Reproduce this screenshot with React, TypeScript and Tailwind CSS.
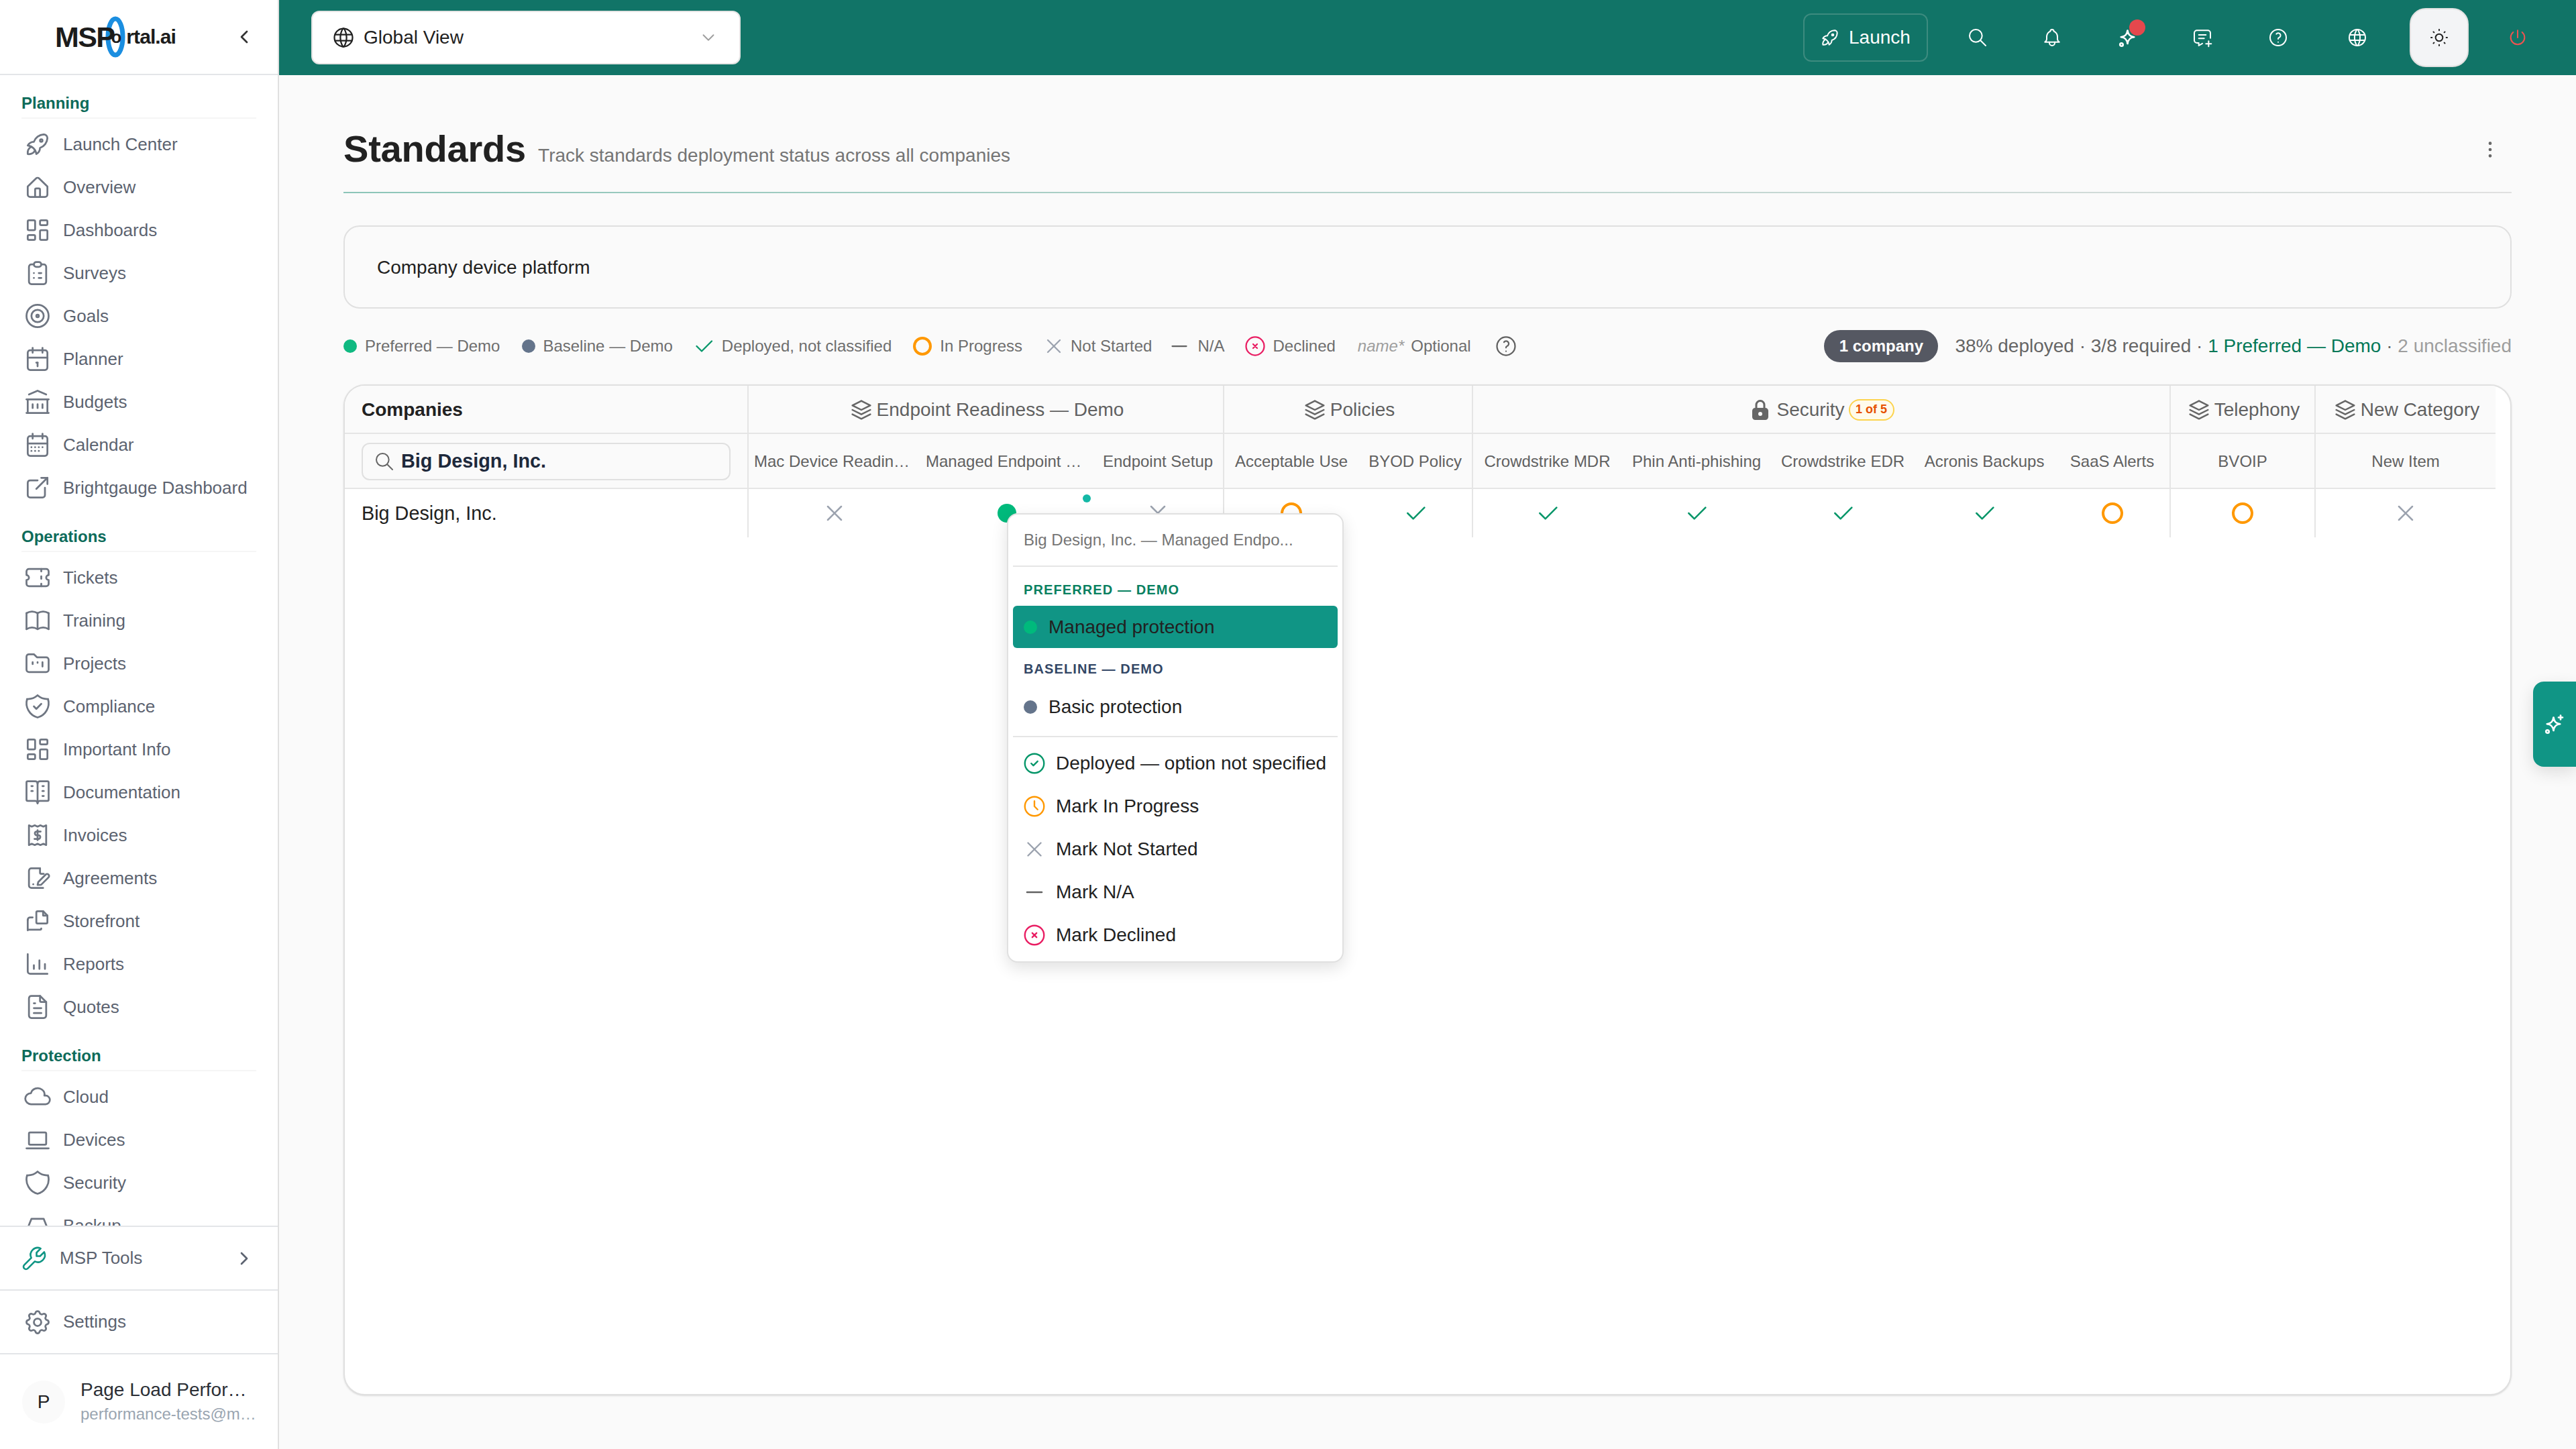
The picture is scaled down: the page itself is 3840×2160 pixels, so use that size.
import type { ReactNode } from 'react';
import {
  TbRocket, TbLayoutDashboard, TbClipboardList, TbTarget, TbCalendar, TbBuildingBank,
  TbCalendarMonth, TbExternalLink, TbTicket, TbBook, TbVocabulary,
  TbFileText, TbCloud, TbDeviceLaptop, TbShield, TbTool, TbSettings,
  TbChevronRight, TbChevronLeft, TbChevronDown, TbSearch, TbBell, TbMessagePlus, TbHelp,
  TbWorld, TbSun, TbPower, TbStack2, TbLockFilled, TbCircleCheck, TbClock, TbX, TbMinus,
  TbCircleX, TbDotsVertical, TbCheck,
} from 'react-icons/tb';

function Glyph({ size = 44, sw = 1.5, children }: { size?: number; sw?: number; children: ReactNode }) {
  return (
    <svg width={size} height={size} viewBox="0 0 24 24" fill="none" stroke="currentColor" strokeWidth={sw} strokeLinecap="round" strokeLinejoin="round">
      {children}
    </svg>
  );
}

const HomeIcon = () => (
  <Glyph><path d="M4 11.5L10.6 5a2 2 0 0 1 2.8 0L20 11.5V18a2 2 0 0 1-2 2H6a2 2 0 0 1-2-2z" /><path d="M10 20v-6a1 1 0 0 1 1-1h2a1 1 0 0 1 1 1v6" /></Glyph>
);
const ProjectsIcon = () => (
  <Glyph><path d="M5 4.5h4l2.5 2.5H19a2 2 0 0 1 2 2v8a2 2 0 0 1-2 2H5a2 2 0 0 1-2-2V6.5a2 2 0 0 1 2-2" /><path d="M8 11v1.5M12 11v.5M16 11v3.5" /></Glyph>
);
const ComplianceIcon = () => (
  <Glyph><path d="M12 3a12 12 0 0 0 8.5 3a12 12 0 0 1-8.5 15a12 12 0 0 1-8.5-15a12 12 0 0 0 8.5-3" /><path d="M9 12l2 2l4-4" /></Glyph>
);
const InvoiceIcon = () => (
  <Glyph><path d="M5 4l2.3 1 2.4-1 2.3 1 2.3-1 2.4 1L19 4v16l-2.3-1-2.4 1-2.3-1-2.3 1-2.4-1L5 20z" /><path d="M14.5 9h-3.2a1.5 1.5 0 0 0 0 3h1.4a1.5 1.5 0 0 1 0 3H9.5" /><path d="M12 8v8" /></Glyph>
);
const AgreementIcon = () => (
  <Glyph><path d="M14 4H7a2 2 0 0 0-2 2v12a2 2 0 0 0 2 2h9.5" /><path d="M14 4v3.5a1 1 0 0 0 1 1h2" /><path d="M8.5 17h.01" /><path d="M12 17.5l.6-2.4 6-6a1.6 1.6 0 0 1 2.3 2.3l-6 6z" /></Glyph>
);
const StorefrontIcon = () => (
  <Glyph><path d="M11 5a1 1 0 0 1 1-1h4.5L20 7.5V13a1 1 0 0 1-1 1h-7a1 1 0 0 1-1-1z" /><path d="M8 9H6a2 2 0 0 0-2 2" /><path d="M4 11v8.5" /><path d="M4 19h10a1 1 0 0 0 1-1" /><path d="M16.5 4v3.5H20" /></Glyph>
);
const ReportsIcon = () => (
  <Glyph><path d="M4 4v14a2 2 0 0 0 2 2h14" /><path d="M9 16v-3M13.5 16v-7M18 16v-4" /></Glyph>
);
const BackupIcon = () => (
  <Glyph><path d="M4 14L7 6.5h10l3 7.5v5H4z" /><path d="M4 14h16" /></Glyph>
);
const SparkleIcon = ({ size = 36 }: { size?: number }) => (
  <Glyph size={size} sw={1.8}>
    <path d="M11 5c.6 4.2 2.4 6 6.5 6.5-4.1.5-5.9 2.3-6.5 6.5-.6-4.2-2.4-6-6.5-6.5C8.6 11 10.4 9.2 11 5z" />
    <path d="M18 3v4M16 5h4" />
    <circle cx="5" cy="19" r="1.5" />
  </Glyph>
);

const planning: [string, ReactNode][] = [
  ['Launch Center', <TbRocket size={44} strokeWidth={1.5} />],
  ['Overview', <HomeIcon />],
  ['Dashboards', <TbLayoutDashboard size={44} strokeWidth={1.5} />],
  ['Surveys', <TbClipboardList size={44} strokeWidth={1.5} />],
  ['Goals', <TbTarget size={44} strokeWidth={1.5} />],
  ['Planner', <TbCalendar size={44} strokeWidth={1.5} />],
  ['Budgets', <TbBuildingBank size={44} strokeWidth={1.5} />],
  ['Calendar', <TbCalendarMonth size={44} strokeWidth={1.5} />],
  ['Brightgauge Dashboard', <TbExternalLink size={44} strokeWidth={1.5} />],
];
const operations: [string, ReactNode][] = [
  ['Tickets', <TbTicket size={44} strokeWidth={1.5} />],
  ['Training', <TbBook size={44} strokeWidth={1.5} />],
  ['Projects', <ProjectsIcon />],
  ['Compliance', <ComplianceIcon />],
  ['Important Info', <TbLayoutDashboard size={44} strokeWidth={1.5} />],
  ['Documentation', <TbVocabulary size={44} strokeWidth={1.5} />],
  ['Invoices', <InvoiceIcon />],
  ['Agreements', <AgreementIcon />],
  ['Storefront', <StorefrontIcon />],
  ['Reports', <ReportsIcon />],
  ['Quotes', <TbFileText size={44} strokeWidth={1.5} />],
];
const protection: [string, ReactNode][] = [
  ['Cloud', <TbCloud size={44} strokeWidth={1.5} />],
  ['Devices', <TbDeviceLaptop size={44} strokeWidth={1.5} />],
  ['Security', <TbShield size={44} strokeWidth={1.5} />],
  ['Backup', <BackupIcon />],
];

function NavSection({ title, items }: { title: string; items: [string, ReactNode][] }) {
  return (
    <div className="mb-[25px]">
      <div className="mx-[32px] mb-[6px] flex h-[39px] items-start border-b-2 border-[#f5f5f5] pt-[1px] text-[24px] leading-[30px] font-bold text-[#0d6b5a]">
        {title}
      </div>
      {items.map(([label, icon]) => (
        <div key={label} className="flex h-[64px] items-center pl-[34px] text-[26px] text-[#5c6370]">
          <span className="flex w-[44px] justify-center text-[#6f7682]">{icon}</span>
          <span className="ml-[16px] whitespace-nowrap">{label}</span>
        </div>
      ))}
    </div>
  );
}

function Sidebar() {
  return (
    <aside className="flex h-[2160px] w-[416px] shrink-0 flex-col border-r-2 border-[#e0e0e0] bg-white">
      <div className="flex h-[112px] shrink-0 items-center justify-between border-b-2 border-[#e3e5e8] pr-[34px] pl-[82px]">
        <div className="relative flex h-[62px] w-[182px] items-center text-[#1c1c1c]">
          <svg className="absolute top-0 left-[75px]" width="30" height="62" viewBox="0 0 30 62" fill="none">
            <ellipse cx="15" cy="31" rx="11" ry="27" stroke="#1b8ee0" strokeWidth="7" />
          </svg>
          <span className="relative text-[43px] leading-none font-bold tracking-[-1.6px]">MSP</span>
          <span className="relative ml-[-5px] text-[26px] leading-none font-bold">o</span>
          <span className="relative ml-[7px] text-[30px] leading-none font-bold tracking-[-0.9px]">rtal.ai</span>
        </div>
        <TbChevronLeft size={32} strokeWidth={2} className="text-[#333]" />
      </div>

      <nav className="min-h-0 flex-1 overflow-hidden pt-[26px]">
        <NavSection title="Planning" items={planning} />
        <NavSection title="Operations" items={operations} />
        <NavSection title="Protection" items={protection} />
      </nav>

      <div className="flex h-[95px] shrink-0 items-center border-t-2 border-[#e3e5e8] pr-[34px] pl-[30px] text-[26px] text-[#5c6370]">
        <TbTool size={42} strokeWidth={1.5} className="-scale-x-100 text-[#0f9584]" />
        <span className="ml-[17px] flex-1">MSP Tools</span>
        <TbChevronRight size={32} strokeWidth={2} className="text-[#5c6370]" />
      </div>
      <div className="flex h-[95px] shrink-0 items-center border-t-2 border-[#e3e5e8] pl-[34px] text-[26px] text-[#5c6370]">
        <span className="flex w-[44px] justify-center text-[#6f7682]"><TbSettings size={44} strokeWidth={1.5} /></span>
        <span className="ml-[16px]">Settings</span>
      </div>
      <div className="flex h-[143px] shrink-0 items-center border-t-2 border-[#e3e5e8] pl-[33px]">
        <div className="flex h-[64px] w-[64px] items-center justify-center rounded-full bg-[#fafafa] text-[28px] text-[#212121]">P</div>
        <div className="ml-[23px] w-[263px]">
          <div className="truncate text-[28px] leading-[36px] text-[#2b2f36]">Page Load Performance Tests</div>
          <div className="truncate text-[24px] leading-[36px] text-[#9aa5b1]">performance-tests@msportal.ai</div>
        </div>
      </div>
    </aside>
  );
}

function Topbar() {
  return (
    <header className="flex h-[112px] shrink-0 items-center bg-[#117467] pr-[71px] pl-[48px] text-white">
      <div className="flex h-[80px] w-[640px] items-center rounded-[12px] border-2 border-[#e4e4e4] bg-white pr-[31px] pl-[28px] text-[28px] text-[#212121]">
        <TbWorld size={36} strokeWidth={1.5} />
        <span className="ml-[12px] flex-1">Global View</span>
        <TbChevronDown size={30} strokeWidth={1.5} className="text-[#9e9e9e]" />
      </div>
      <div className="flex-1" />
      <div className="flex h-[72px] w-[186px] items-center rounded-[12px] border-2 border-[#3d8b7f] pl-[22px] text-[28px]">
        <TbRocket size={32} strokeWidth={1.5} />
        <span className="ml-[12px]">Launch</span>
      </div>
      <span className="ml-[58px]"><TbSearch size={32} strokeWidth={1.5} /></span>
      <span className="ml-[79px]"><TbBell size={32} strokeWidth={1.5} /></span>
      <span className="relative ml-[80px]">
        <SparkleIcon />
        <span className="absolute top-[-9px] left-[19px] h-[24px] w-[24px] rounded-full bg-[#e5484d]" />
      </span>
      <span className="ml-[76px]"><TbMessagePlus size={32} strokeWidth={1.5} /></span>
      <span className="ml-[81px]"><TbHelp size={32} strokeWidth={1.5} /></span>
      <span className="ml-[86px]"><TbWorld size={32} strokeWidth={1.5} /></span>
      <div className="ml-[62px] flex h-[88px] w-[88px] items-center justify-center rounded-[24px] border-2 border-[#e0e0e0] bg-[#f3f4f6] text-[#212121]">
        <TbSun size={32} strokeWidth={1.5} />
      </div>
      <span className="ml-[57px] text-[#ef5350]"><TbPower size={32} strokeWidth={1.5} /></span>
    </header>
  );
}

function Legend() {
  return (
    <div className="flex items-center text-[24px] text-[#6e6e6e]">
      <span className="h-[20px] w-[20px] rounded-full bg-[#10b981]" />
      <span className="ml-[12px]">Preferred — Demo</span>
      <span className="ml-[33px] h-[20px] w-[20px] rounded-full bg-[#64748b]" />
      <span className="ml-[11px]">Baseline — Demo</span>
      <TbCheck size={36} strokeWidth={1.5} className="ml-[28px] text-[#059669]" />
      <span className="ml-[9px]">Deployed, not classified</span>
      <span className="ml-[32px] h-[28px] w-[28px] rounded-full border-[4px] border-[#ff9800]" />
      <span className="ml-[12px]">In Progress</span>
      <TbX size={36} strokeWidth={1.5} className="ml-[29px] text-[#9ca3af]" />
      <span className="ml-[7px]">Not Started</span>
      <TbMinus size={36} strokeWidth={1.5} className="ml-[23px] text-[#616161]" />
      <span className="ml-[9px]">N/A</span>
      <TbCircleX size={36} strokeWidth={1.5} className="ml-[28px] text-[#e91e63]" />
      <span className="ml-[8px]">Declined</span>
      <span className="ml-[33px] text-[#9e9e9e] italic">name*</span>
      <span className="ml-[10px]">Optional</span>
      <TbHelp size={36} strokeWidth={1.5} className="ml-[34px] text-[#616161]" />
    </div>
  );
}

const Stack = () => <TbStack2 size={40} strokeWidth={1.5} className="text-[#666]" />;

function GroupHead({ span, label, icon, badge, last }: { span: number; label: string; icon: ReactNode; badge?: string; last?: boolean }) {
  return (
    <th colSpan={span} className={`border-b-2 border-[#e5e5e5] bg-[#fafafa] p-0 pt-[1px] text-[28px] font-normal text-[#616161] ${last ? '' : 'border-r-2'}`}>
      <div className={`flex items-center justify-center ${badge ? 'gap-[6px]' : 'gap-[3px]'}`}>
        {icon}
        <span className="whitespace-nowrap">{label}</span>
        {badge && (
          <span className="flex h-[32px] w-[68px] items-center justify-center rounded-[16px] border-2 border-[#fcd34d] bg-[#fffbeb] text-[18px] font-bold text-[#e65100]">
            {badge}
          </span>
        )}
      </div>
    </th>
  );
}

function ColHead({ label, end, tight }: { label: string; end?: boolean; tight?: boolean }) {
  return (
    <th className={`border-b-2 border-[#e5e5e5] bg-[#fafafa] pt-[2px] pb-0 text-center text-[24px] font-normal text-[#616161] ${tight ? 'px-[8px]' : 'px-0'} ${end ? 'border-r-2' : ''}`}>
      <div className="truncate">{label}</div>
    </th>
  );
}

function Cell({ children, end }: { children?: ReactNode; end?: boolean }) {
  return (
    <td className={`p-0 ${end ? 'border-r-2 border-[#e5e5e5]' : ''}`}>
      <div className="relative flex h-[72px] items-center justify-center">{children}</div>
    </td>
  );
}

const Done = () => <TbCheck size={40} strokeWidth={1.5} className="text-[#059669]" />;
const Todo = () => <TbX size={40} strokeWidth={1.5} className="text-[#9ca3af]" />;
const Ring = () => <span className="h-[32px] w-[32px] rounded-full border-[4px] border-[#ff9800]" />;

function MatrixTable() {
  return (
    <div className="h-[1507px] overflow-hidden rounded-[32px] border-2 border-[#e0e0e0] bg-white shadow-sm">
      <table className="w-[3206px] table-fixed border-separate border-spacing-0">
        <colgroup>
          <col className="w-[602px]" />
          <col className="w-[256px]" />
          <col className="w-[257px]" />
          <col className="w-[196px]" />
          <col className="w-[200px]" />
          <col className="w-[171px]" />
          <col className="w-[221px]" />
          <col className="w-[224px]" />
          <col className="w-[212px]" />
          <col className="w-[210px]" />
          <col className="w-[173px]" />
          <col className="w-[216px]" />
          <col className="w-[268px]" />
        </colgroup>
        <thead>
          <tr className="h-[72px]">
            <th className="border-r-2 border-b-2 border-[#e5e5e5] bg-[#fafafa] pt-[1px] pl-[25px] text-left text-[28px] font-bold text-[#212121]">Companies</th>
            <GroupHead span={3} label="Endpoint Readiness — Demo" icon={<Stack />} />
            <GroupHead span={2} label="Policies" icon={<Stack />} />
            <GroupHead span={5} label="Security" badge="1 of 5" icon={<TbLockFilled size={36} className="text-[#666]" />} />
            <GroupHead span={1} label="Telephony" icon={<Stack />} />
            <GroupHead span={1} label="New Category" icon={<Stack />} last />
          </tr>
          <tr className="h-[82px]">
            <th className="border-r-2 border-b-2 border-[#e5e5e5] bg-[#fafafa] px-[25px] pt-[2px] font-normal">
              <div className="flex h-[56px] items-center rounded-[12px] border-2 border-[#e0e0e0] bg-[#fafafa] pl-[16px]">
                <TbSearch size={32} strokeWidth={1.5} className="text-[#666]" />
                <span className="ml-[9px] text-[28.8px] font-bold text-[#1e293b]">Big Design, Inc.</span>
              </div>
            </th>
            <ColHead label="Mac Device Readiness" tight />
            <ColHead label="Managed Endpoint Protection" tight />
            <ColHead label="Endpoint Setup" end />
            <ColHead label="Acceptable Use" />
            <ColHead label="BYOD Policy" end />
            <ColHead label="Crowdstrike MDR" />
            <ColHead label="Phin Anti-phishing" />
            <ColHead label="Crowdstrike EDR" />
            <ColHead label="Acronis Backups" />
            <ColHead label="SaaS Alerts" end />
            <ColHead label="BVOIP" end />
            <ColHead label="New Item" />
          </tr>
        </thead>
        <tbody>
          <tr>
            <td className="border-r-2 border-[#e5e5e5] pt-[2px] pl-[25px] text-[28.8px] text-[#212121]">Big Design, Inc.</td>
            <Cell><Todo /></Cell>
            <Cell>
              <span className="h-[28px] w-[28px] rounded-full bg-[#00ba7c]" />
              <span className="absolute top-[8px] left-[242px] h-[12px] w-[12px] rounded-full bg-[#14b8a6]" />
            </Cell>
            <Cell end><Todo /></Cell>
            <Cell><Ring /></Cell>
            <Cell end><Done /></Cell>
            <Cell><Done /></Cell>
            <Cell><Done /></Cell>
            <Cell><Done /></Cell>
            <Cell><Done /></Cell>
            <Cell end><Ring /></Cell>
            <Cell end><Ring /></Cell>
            <Cell><Todo /></Cell>
          </tr>
        </tbody>
      </table>
    </div>
  );
}

function StatusMenu() {
  const rows: [string, ReactNode][] = [
    ['Deployed — option not specified', <TbCircleCheck size={38} strokeWidth={1.5} className="text-[#059669]" />],
    ['Mark In Progress', <TbClock size={38} strokeWidth={1.5} className="text-[#ff9800]" />],
    ['Mark Not Started', <TbX size={38} strokeWidth={1.5} className="text-[#9ca3af]" />],
    ['Mark N/A', <TbMinus size={38} strokeWidth={1.5} className="text-[#616161]" />],
    ['Mark Declined', <TbCircleX size={38} strokeWidth={1.5} className="text-[#e91e63]" />],
  ];
  return (
    <div className="absolute top-[765px] left-[1501px] w-[502px] rounded-[16px] border-2 border-[#e0e0e0] bg-white p-[7px] shadow-[0_8px_24px_rgba(0,0,0,0.12)]">
      <div className="flex h-[69px] items-center truncate px-[16px] pb-[7px] text-[24px] text-[#757575]">Big Design, Inc. — Managed Endpo...</div>
      <div className="h-[2px] bg-[#e5e5e5]" />
      <div className="flex h-[58px] items-center px-[16px] pt-[10px] text-[20px] font-bold tracking-[1.1px] text-[#08805f]">PREFERRED — DEMO</div>
      <div className="flex h-[63px] items-center rounded-[6px] bg-[#109585] px-[16px] text-[28px] text-[#212121]">
        <span className="h-[20px] w-[20px] rounded-full bg-[#00ba7c]" />
        <span className="ml-[17px]">Managed protection</span>
      </div>
      <div className="flex h-[56px] items-center px-[16px] pt-[6px] text-[20px] font-bold tracking-[1.1px] text-[#334766]">BASELINE — DEMO</div>
      <div className="flex h-[64px] items-center px-[16px] text-[28px] text-[#212121]">
        <span className="h-[20px] w-[20px] rounded-full bg-[#64748b]" />
        <span className="ml-[17px]">Basic protection</span>
      </div>
      <div className="mt-[11px] mb-[7px] h-[2px] bg-[#e5e5e5]" />
      {rows.map(([label, icon]) => (
        <div key={label} className="flex h-[64px] items-center pl-[13px] text-[28px] whitespace-nowrap text-[#212121]">
          {icon}
          <span className="ml-[13px]">{label}</span>
        </div>
      ))}
    </div>
  );
}

export default function App() {
  return (
    <div className="relative flex h-[2160px] w-[3840px] overflow-hidden bg-[#fafafa] font-['Liberation_Sans',Arial,sans-serif]">
      <Sidebar />
      <div className="flex min-w-0 flex-1 flex-col">
        <Topbar />
        <main className="flex-1 px-[96px] pt-[76px]">
          <div className="flex h-[68px] items-baseline">
            <h1 className="text-[56px] leading-[68px] font-bold tracking-[-0.2px] text-[#212121]">Standards</h1>
            <span className="ml-[18px] text-[28px] text-[#757575]">Track standards deployment status across all companies</span>
            <span className="ml-auto self-center pt-[1px] pr-[16px] text-[#616161]"><TbDotsVertical size={32} strokeWidth={1.5} /></span>
          </div>
          <div className="mt-[30px] h-[2px] bg-linear-to-r from-[#8cc5b8] to-[#e0e0e0]" />
          <div className="mt-[48px] flex h-[124px] items-center rounded-[24px] border-2 border-[#e0e0e0] pt-[2px] pl-[48px] text-[28px] text-[#212121]">
            Company device platform
          </div>
          <div className="mt-[32px] flex h-[48px] items-center justify-between">
            <Legend />
            <div className="flex items-center text-[28px] whitespace-pre text-[#666]">
              <span className="mr-[25px] flex h-[48px] w-[170px] items-center justify-center rounded-[24px] bg-[#555862] text-[24px] font-bold text-white">1 company</span>
              <span>38% deployed · 3/8 required · </span>
              <span className="text-[#047857]">1 Preferred — Demo</span>
              <span className="text-[#666]"> · </span>
              <span className="text-[#9e9e9e]">2 unclassified</span>
            </div>
          </div>
          <div className="mt-[33px]">
            <MatrixTable />
          </div>
        </main>
      </div>
      <StatusMenu />
      <div className="absolute top-[1016px] right-0 flex h-[127px] w-[64px] items-center justify-center rounded-l-[16px] bg-[#109585] text-white shadow-[0_8px_24px_rgba(0,0,0,0.12)]">
        <SparkleIcon />
      </div>
    </div>
  );
}
